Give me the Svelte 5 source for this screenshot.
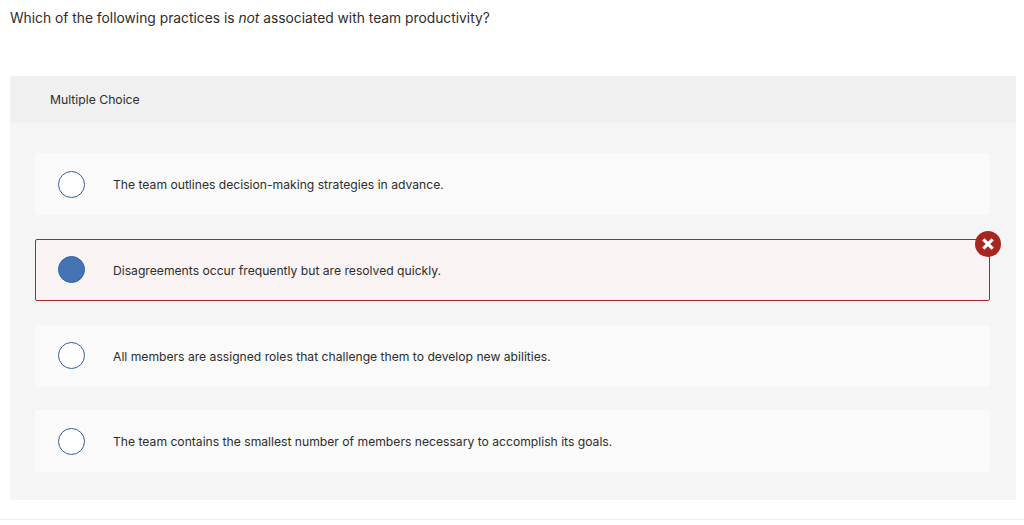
<script>
	const choices = [
		{ text: 'The team outlines decision-making strategies in advance.' },
		{ text: 'Disagreements occur frequently but are resolved quickly.', picked: true },
		{ text: 'All members are assigned roles that challenge them to develop new abilities.' },
		{ text: 'The team contains the smallest number of members necessary to accomplish its goals.' }
	];
</script>

<main class="page">
	<p class="question">Which of the following practices is <em>not</em> associated with team productivity?</p>

	<section class="panel">
		<header class="panel-head">Multiple Choice</header>
		<ul class="choices">
			{#each choices as choice}
				<li class="choice" class:wrong={choice.picked}>
					<span class="radio" class:filled={choice.picked}></span>
					<span class="label">{choice.text}</span>
					{#if choice.picked}
						<span class="badge">
							<svg width="12" height="12" viewBox="0 0 12 12">
								<path d="M2.4 2.4L9.6 9.6M9.6 2.4L2.4 9.6" stroke="#fff" stroke-width="3.2" stroke-linecap="square" />
							</svg>
						</span>
					{/if}
				</li>
			{/each}
		</ul>
	</section>
	<div class="rule"></div>
</main>

<style>
	:global(body) {
		margin: 0;
		background: #fff;
	}
	.page {
		height: 525px;
		box-sizing: border-box;
		padding: 9px 8px 0 10px;
		font-family: Inter, 'Liberation Sans', sans-serif;
		color: #2d2d2d;
		overflow: hidden;
	}
	.question {
		margin: 0 0 49px;
		height: 18px;
		font-size: 13.8px;
		line-height: 18px;
	}
	.panel {
		height: 424px;
		background: #f5f5f5;
		border-radius: 3px 3px 0 0;
	}
	.panel-head {
		height: 47px;
		padding-left: 40px;
		background: #f0f0f0;
		border-radius: 3px 3px 0 0;
		font-size: 12.2px;
		line-height: 48px;
		box-sizing: border-box;
	}
	.choices {
		list-style: none;
		margin: 0;
		padding: 30px 26px 0 25px;
		display: flex;
		flex-direction: column;
		gap: 23.8px;
	}
	.choice {
		position: relative;
		height: 62px;
		box-sizing: border-box;
		display: flex;
		align-items: center;
		gap: 28px;
		padding-left: 23px;
		background: #fafafa;
		border-radius: 2px;
		font-size: 12.15px;
	}
	.label {
		padding-top: 1px;
	}
	.choice.wrong {
		background: #f9f3f3;
		border: 1px solid #a92a22;
		padding-left: 22px;
	}
	.radio {
		flex: none;
		width: 27px;
		height: 27px;
		box-sizing: border-box;
		border: 1px solid #2f5f9e;
		border-radius: 50%;
		background: #fff;
	}
	.radio.filled {
		background: #4474b3;
	}
	.badge {
		position: absolute;
		top: -9px;
		right: -12px;
		width: 26px;
		height: 26px;
		border-radius: 50%;
		background: #a9261e;
		display: flex;
		align-items: center;
		justify-content: center;
	}
	.rule {
		height: 1px;
		margin: 19px -8px 0 -10px;
		background: #efefef;
	}
</style>
